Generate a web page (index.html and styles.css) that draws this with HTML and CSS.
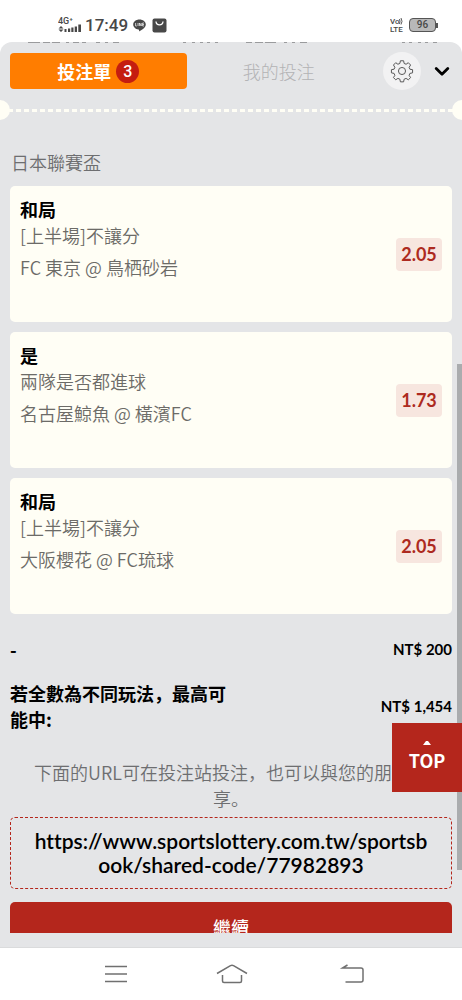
FILE: index.html
```html
<!DOCTYPE html>
<html lang="zh-CN">
<head>
<meta charset="utf-8">
<meta name="viewport" content="width=device-width, initial-scale=1">
<title>投注單</title>
<link rel="stylesheet" href="styles.css">
</head>
<body>
<div class="phone">
  <header class="status">
    <div class="status-side">
      <svg class="signal" width="24" height="20" viewBox="0 0 24 20" aria-hidden="true">
        <text x="0" y="9" class="signal-text">4G⁺</text>
        <path d="M0.5 13.500 3 11 5.500 13.500zM0.500 14.500 3 17 5.500 14.500z"/>
        <path d="M6.500 14h2v3h-2zM10 13.500h2.200V17H10zM13.300 12.500h2.200V17h-2.200zM16.700 11.500h2.300V17h-2.300zM20.300 9.500h2.700V17h-2.700z"/>
      </svg>
      <span class="clock">17:49</span>
      <svg class="line-icon" width="13" height="13" viewBox="0 0 13 13" aria-hidden="true">
        <path d="M6.500.5C2.900.5.2 2.800.2 5.600c0 2.600 2.300 4.600 5.300 5 .8.200.6.700.5 1.900 1.700-.9 6.800-3.400 6.800-6.900C12.800 2.800 10 .5 6.500.5z" fill="#484848"/>
        <path d="M2.600 4v3h1.200M5 4v3M6.400 7V4l1.800 3V4M11 4H9.600v3H11M9.600 5.500H11" fill="none" stroke="#fff" stroke-width=".7"/>
      </svg>
      <svg class="bag-icon" width="15" height="15" viewBox="0 0 15 15" aria-hidden="true">
        <rect x=".5" y=".5" width="14" height="14" rx="2" fill="#484848"/>
        <path d="M4 3.500c.3 4.500 6.700 4.500 7 0" fill="none" stroke="#fff" stroke-width="1.300"/>
      </svg>
    </div>
    <div class="status-side">
      <svg class="volte" width="14" height="18" viewBox="0 0 14 18" aria-hidden="true">
        <text x="0" y="8">Vo</text>
        <path d="M9.500 3q1 2.500 0 5M11 2q2 3.500 0 6.500" fill="none" stroke="#484848" stroke-width=".9"/>
        <text x="0" y="16">LTE</text>
      </svg>
      <span class="battery">96</span>
    </div>
  </header>

  <main class="sheet">
    <svg class="passed" height="2" aria-hidden="true"><path d="M28 .5h12m3 0h7m2 0h8m6 0h3m4 0h6m3 0h4m10 0h4m5 0h3m5 0h6M183 .5h3m6 0h3m5 0h3m4 0h3m5 0h3M246 .5h6m3 0h8m2 0h11m8 0h3m5 0h3m5 0h7M402 .5h3m4 0h3m6 0h3m4 0h3m5 0h4" stroke="#9a9b9d" stroke-width="1"/></svg>
    <nav class="tabs">
      <button class="tab tab-active" type="button">投注單<span class="count">3</span></button>
      <button class="tab" type="button">我的投注</button>
      <button class="gear" type="button" aria-label="設定">
        <svg width="24" height="24" viewBox="0 0 26 27" fill="none" stroke="#555" stroke-width="1.100" stroke-linejoin="round">
          <path d="M11.200 2h3.600l.6 3 2.200.9 2.500-1.700 2.600 2.600-1.700 2.500.9 2.200 3 .5v3.600l-3 .6-.9 2.200 1.700 2.500-2.600 2.500-2.500-1.600-2.200.9-.6 3h-3.600l-.6-3-2.200-.9-2.500 1.600-2.500-2.500L5 18.400l-.9-2.200-3-.6V12l3-.5L5 9.300 3.400 6.800l2.500-2.600 2.500 1.700 2.200-.9z"/>
          <circle cx="13" cy="13.500" r="4"/>
        </svg>
      </button>
      <button class="collapse" type="button" aria-label="收合">
        <svg width="16" height="11" viewBox="0 0 16 11" fill="none" stroke="#000" stroke-width="2.800" stroke-linecap="round" stroke-linejoin="round"><path d="M2.200 2.500 8 8.200 13.800 2.500"/></svg>
      </button>
    </nav>
    <div class="perforation"></div>

    <section class="slip">
      <h2 class="league">日本聯賽盃</h2>
      <ul class="bets">
        <li class="bet"><div><h3>和局</h3><p>[上半場]不讓分</p><p class="match">FC 東京 @ 鳥栖砂岩</p></div><span class="odds">2.05</span></li>
        <li class="bet"><div><h3>是</h3><p>兩隊是否都進球</p><p class="match">名古屋鯨魚 @ 橫濱FC</p></div><span class="odds">1.73</span></li>
        <li class="bet"><div><h3>和局</h3><p>[上半場]不讓分</p><p class="match">大阪櫻花 @ FC琉球</p></div><span class="odds">2.05</span></li>
      </ul>
      <dl class="totals">
        <div><dt>-</dt><dd>NT$ 200</dd></div>
        <div><dt>若全數為不同玩法，最高可能中:</dt><dd>NT$ 1,454</dd></div>
      </dl>
      <p class="hint">下面的URL可在投注站投注，也可以與您的朋友分享。</p>
      <a class="share" href="https://www.sportslottery.com.tw/sportsbook/shared-code/77982893">https://www.sportslottery.com.tw/sportsbook/shared-code/77982893</a>
      <div class="continue-clip"><button class="continue" type="button">繼續</button></div>
    </section>
    <div class="scroll-thumb"></div>
    <button class="to-top" type="button"><svg width="8" height="4" viewBox="0 0 8 4" aria-hidden="true"><path d="M0 4 3 0h2l3 4z" fill="#fff"/></svg>TOP</button>
  </main>

  <footer class="system-nav">
    <button type="button" aria-label="選單"><svg width="22" height="18" viewBox="0 0 22 18"><path d="M0 1.500h22M0 9h22M0 16.500h22"/></svg></button>
    <button type="button" aria-label="首頁"><svg width="32" height="20" viewBox="0 0 32 20"><path d="M1 9.500 14.500 1.700q1.500-.8 3 0L31 9.500M6.500 11v6q0 1.500 1.500 1.500h16q1.500 0 1.500-1.500v-6"/></svg></button>
    <button type="button" aria-label="返回"><svg width="28" height="20" viewBox="-4 0 28 20"><path d="M6.500 1 1.500 4H20q2 0 2 2v10q0 2-2 2H4.500"/></svg></button>
  </footer>
</div>
</body>
</html>
```

FILE: styles.css
```css
* { box-sizing: border-box; }
body {
  margin: 0;
  background: #fff;
  color: #000;
  font-family: "Noto Sans CJK SC", "Noto Sans CJK TC", sans-serif;
}
button { border: 0; padding: 0; font: inherit; background: none; }
h2, h3, p, ul, dl, dd { margin: 0; padding: 0; }
.phone { display: flex; flex-direction: column; height: 100vh; overflow: hidden; }

.status {
  flex: none;
  display: flex;
  align-items: center;
  justify-content: space-between;
  height: 42px;
  padding: 8px 26px 0 58px;
  color: #484848;
}
.status-side { display: flex; align-items: center; }
.signal { fill: #484848; }
.signal-text { font: 500 9px Roboto, sans-serif; }
.clock { margin-left: 3px; font: 500 17px/20px Roboto, sans-serif; }
.line-icon { margin-left: 5px; }
.bag-icon { margin-left: 6px; }
.volte { fill: #484848; font: 500 8px Roboto, sans-serif; }
.battery {
  position: relative;
  width: 27px;
  margin-left: 5px;
  border: 1px solid #555;
  border-radius: 4px;
  background: #b8b8b8;
  font: 500 10px/12px Roboto, sans-serif;
  text-align: center;
}
.battery::after {
  content: "";
  position: absolute;
  right: -3px;
  top: 4px;
  width: 2px;
  height: 5px;
  background: #555;
}

.sheet {
  position: relative;
  flex: 1;
  min-height: 0;
  display: flex;
  flex-direction: column;
  overflow: hidden;
  border-radius: 12px 12px 0 0;
  background: #e4e5e7;
}
.passed { flex: none; width: 100%; }
.tabs {
  flex: none;
  display: flex;
  align-items: center;
  height: 54px;
  padding: 0 12px 0 10px;
}
.tab {
  flex: 1;
  height: 36px;
  display: flex;
  align-items: center;
  justify-content: center;
  border-radius: 4px;
  color: #b3b3b5;
  font-size: 18px;
  font-weight: 300;
}
.tab + .tab { margin-left: 4px; }
.tab-active { background: #ff7d00; color: #fff; font-weight: 700; }
.count {
  width: 23px;
  margin-left: 5px;
  border-radius: 50%;
  background: #c51d10;
  font: 500 16px/23px Roboto, sans-serif;
}
.gear {
  display: grid;
  place-items: center;
  width: 38px;
  height: 38px;
  margin-left: 16px;
  border-radius: 50%;
  background: #f2f2f3;
}
.collapse { display: grid; margin-left: 13px; }
.perforation {
  flex: none;
  position: relative;
  height: 24px;
  background: repeating-linear-gradient(90deg, #fffef5 0 5px, transparent 5px 8px) 0 11px / 100% 3px no-repeat;
}
.perforation::before, .perforation::after {
  content: "";
  position: absolute;
  top: 2px;
  left: -10px;
  width: 20px;
  height: 20px;
  border-radius: 50%;
  background: #fffef5;
}
.perforation::after { left: auto; right: -10px; }

.slip { flex: none; padding: 27px 10px 0; }
.league { margin-left: 1px; color: #6d6e70; font-size: 18px; line-height: 26px; font-weight: 350; }
.bets { display: grid; gap: 10px; margin-top: 11px; list-style: none; }
.bet {
  display: flex;
  align-items: center;
  justify-content: space-between;
  min-height: 136px;
  padding: 10px;
  border-radius: 5px;
  background: #fffef5;
}
.bet > div { align-self: flex-start; }
.bet h3 { font-size: 18px; line-height: 26px; font-weight: 700; }
.bet p { color: #6c6b67; font-size: 18px; line-height: 26px; font-weight: 350; }
.bet .match { margin-top: 6px; }
.odds {
  width: 46px;
  border-radius: 4px;
  background: #f7e6df;
  color: #ad2a20;
  font: 700 18px/33px Lato, sans-serif;
  text-align: center;
}
.totals { margin-top: 22px; font-weight: 700; }
.totals > div { display: flex; align-items: center; justify-content: space-between; }
.totals > div + div { margin-top: 18px; }
.totals dt { max-width: 50%; font-size: 18px; line-height: 26px; }
.totals dd { font: 700 15px/26px Lato, sans-serif; }
.hint {
  margin-top: 27px;
  padding: 0 22px;
  color: #6d6e70;
  font-size: 18px;
  line-height: 26px;
  font-weight: 350;
  text-align: center;
}
.share {
  display: block;
  margin-top: 6px;
  padding: 11px 22px;
  border: 1px dashed #b4261c;
  border-radius: 5px;
  color: #000;
  font: 600 21px/24px Lato, sans-serif;
  font-variant-ligatures: none;
  text-align: center;
  text-decoration: none;
  word-break: break-all;
}
.continue-clip { height: 31px; margin-top: 13px; overflow: hidden; }
.continue {
  width: 100%;
  height: 49px;
  border-radius: 5px;
  background: #b4261c;
  color: #fff;
  font-size: 18px;
  font-weight: 500;
}
.scroll-thumb {
  position: absolute;
  top: 322px;
  right: 0;
  width: 5px;
  height: 506px;
  background: #aaacae;
}
.to-top {
  position: absolute;
  right: 0;
  bottom: 155px;
  display: flex;
  flex-direction: column;
  align-items: center;
  justify-content: center;
  width: 70px;
  height: 69px;
  background: #b4261c;
  color: #fff;
  font-size: 18px;
  font-weight: 700;
  line-height: 30px;
}
.system-nav {
  flex: none;
  display: flex;
  justify-content: center;
  gap: 89px;
  height: 53px;
  padding-left: 8px;
  border-top: 1px solid #dadbdc;
  background: #fff;
}
.system-nav svg { display: block; fill: none; stroke: #707070; stroke-width: 1.5; }
```
